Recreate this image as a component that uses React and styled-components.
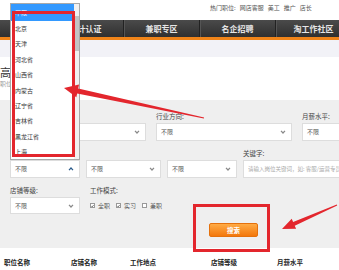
import React from "react";
import styled, { createGlobalStyle } from "styled-components";

const GlobalStyle = createGlobalStyle`
  html, body { margin: 0; padding: 0; background: #fff; }
  body { font-family: "Noto Sans CJK SC", "Noto Sans", sans-serif; color: #333; }
`;

const Page = styled.div`
  position: relative;
  width: 339px;
  height: 270px;
  overflow: hidden;
  background: #fff;
`;

const TopBar = styled.div`
  height: 20px;
  box-sizing: border-box;
  padding: 4px 0 0 210px;
  display: flex;
  gap: 4px;
  font-size: 6px;
  line-height: 7px;
  color: #555;
  white-space: nowrap;
`;

const NavBar = styled.div`
  height: 17px;
  display: flex;
  padding-left: 48px;
  background: linear-gradient(#4a4a4a, #303030);
  border-bottom: 3px solid #f08419;
`;

const NavItem = styled.div`
  width: 75px;
  flex: none;
  display: flex;
  align-items: center;
  justify-content: center;
  font-size: 8px;
  font-weight: 700;
  color: #e6e6e6;
  border-left: ${(p) => (p.$first ? "none" : "1px solid #222")};
  box-shadow: ${(p) => (p.$first ? "none" : "inset 1px 0 0 #555")};
  white-space: nowrap;
`;

const SubBand = styled.div`
  height: 17px;
  background: #f2f2f7;
`;

const TitleArea = styled.div`
  height: 43px;
  box-sizing: border-box;
  padding-top: 9px;
`;

const Title = styled.div`
  font-size: 11px;
  line-height: 12px;
  color: #333;
`;

const SubTitle = styled.div`
  margin-top: 2px;
  font-size: 6px;
  line-height: 7px;
  color: #999;
`;

const Form = styled.div`
  height: 148px;
  box-sizing: border-box;
  background: #efefef;
  padding: 12px 0 0 10px;
  display: flex;
  flex-direction: column;
  gap: 8px;
`;

const Row = styled.div`
  display: grid;
  grid-template-columns: ${(p) => p.$cols};
  column-gap: ${(p) => p.$gap}px;
  align-items: end;
`;

const Field = styled.div`
  display: flex;
  flex-direction: column;
  gap: 2px;
`;

const Label = styled.div`
  height: 9px;
  font-size: 6.5px;
  line-height: 9px;
  color: #444;
  white-space: nowrap;
`;

const Select = styled.div`
  height: ${(p) => p.$h || 18}px;
  box-sizing: border-box;
  background: #fff;
  border: 1px solid #dddddd;
  padding: 0 5px 0 4px;
  display: flex;
  align-items: center;
  justify-content: space-between;
  font-size: 6px;
  line-height: 8px;
  color: #555;
`;

const Input = styled.input`
  display: block;
  width: 130px;
  height: 18px;
  box-sizing: border-box;
  border: 1px solid #dddddd;
  background: #fff;
  padding: 0 4px;
  font-family: inherit;
  font-size: 5.5px;
  outline: none;
  &::placeholder { color: #aaa; }
`;

const Checks = styled.div`
  height: 17px;
  display: flex;
  align-items: center;
  gap: 6px;
`;

const Check = styled.label`
  display: flex;
  align-items: center;
  gap: 3px;
  font-size: 6px;
  line-height: 8px;
  color: #555;
`;

const Box = styled.span`
  width: 5px;
  height: 5px;
  box-sizing: border-box;
  border: 1px solid #999;
  background: #fff;
  display: flex;
  align-items: center;
  justify-content: center;
`;

const ButtonRow = styled.div`
  display: flex;
  padding-left: 199px;
  margin-top: 1px;
`;

const SearchButton = styled.button`
  width: 49px;
  height: 14px;
  padding: 0;
  border: 1px solid #e5710c;
  border-radius: 2px;
  background: linear-gradient(#ffab45, #f3780c);
  color: #fff;
  font-family: inherit;
  font-size: 6.5px;
  font-weight: 700;
  line-height: 12px;
`;

const TableHead = styled.div`
  height: 22px;
  box-sizing: border-box;
  padding: 10px 0 0 4px;
  display: grid;
  grid-template-columns: 67px 59px 81px 66px 1fr;
  font-size: 6.5px;
  line-height: 8px;
  font-weight: 700;
  color: #222;
`;

const Dropdown = styled.div`
  position: absolute;
  left: 10px;
  top: 3px;
  width: 70px;
  height: 157px;
  box-sizing: border-box;
  border: 1px solid #a9a9a9;
  background: #fff;
  overflow: hidden;
`;

const Option = styled.div`
  height: ${(p) => p.$h}px;
  line-height: ${(p) => p.$h}px;
  padding-left: 4px;
  font-size: 6px;
  color: ${(p) => (p.$active ? "#fff" : "#333")};
  background: ${(p) => (p.$active ? "#3399ff" : "transparent")};
  white-space: nowrap;
`;

const ScrollTrack = styled.div`
  position: absolute;
  right: 0;
  top: 0;
  bottom: 0;
  width: 5px;
  background: #f1f1f1;
`;

const ScrollThumb = styled.div`
  position: absolute;
  left: 0;
  right: 0;
  top: 12px;
  height: 35px;
  background: #c4c4c4;
`;

const RedFrame = styled.div`
  position: absolute;
  left: ${(p) => p.$x}px;
  top: ${(p) => p.$y}px;
  width: ${(p) => p.$w}px;
  height: ${(p) => p.$h}px;
  box-sizing: border-box;
  border: 3px solid #e3262d;
  pointer-events: none;
`;

const Overlay = styled.svg`
  position: absolute;
  left: 0;
  top: 0;
  pointer-events: none;
`;

const Chevron = ({ up, color = "#888" }) => (
  <svg width="6" height="4" viewBox="0 0 6 4">
    <polyline
      points={up ? "1,3.2 3,1 5,3.2" : "1,0.8 3,3 5,0.8"}
      fill="none"
      stroke={color}
      strokeWidth="1.2"
    />
  </svg>
);

const Tick = () => (
  <svg width="4" height="4" viewBox="0 0 4 4">
    <polyline points="0.5,2 1.6,3.1 3.5,0.8" fill="none" stroke="#333" strokeWidth="0.9" />
  </svg>
);

const arrow = (x1, y1, x2, y2, tailW, shaftW, headL, headW) => {
  const len = Math.hypot(x2 - x1, y2 - y1);
  const ux = (x2 - x1) / len;
  const uy = (y2 - y1) / len;
  const nx = -uy;
  const ny = ux;
  const bx = x2 - ux * headL;
  const by = y2 - uy * headL;
  const side = (x, y, w, s) => `${x + (s * nx * w) / 2},${y + (s * ny * w) / 2}`;
  return [
    side(x1, y1, tailW, 1),
    side(bx, by, shaftW, 1),
    side(bx, by, headW, 1),
    `${x2},${y2}`,
    side(bx, by, headW, -1),
    side(bx, by, shaftW, -1),
    side(x1, y1, tailW, -1),
  ].join(" ");
};

const provinces = ["北京", "天津", "河北省", "山西省", "内蒙古", "辽宁省", "吉林省", "黑龙江省", "上海", "江苏省"];

const CheckItem = ({ checked, children }) => (
  <Check>
    <Box>{checked && <Tick />}</Box>
    {children}
  </Check>
);

export default function App() {
  return (
    <Page>
      <GlobalStyle />
      <TopBar>
        <span>热门职位:</span>
        <span>网店客服</span>
        <span>美工</span>
        <span>推广</span>
        <span>店长</span>
      </TopBar>
      <NavBar>
        <NavItem $first>设计认证</NavItem>
        <NavItem>兼职专区</NavItem>
        <NavItem>名企招聘</NavItem>
        <NavItem>淘工作社区</NavItem>
      </NavBar>
      <SubBand />
      <TitleArea>
        <Title>高</Title>
        <SubTitle>职位</SubTitle>
      </TitleArea>

      <Form>
        <Row $cols="136px 136px 136px" $gap={10}>
          <Field>
            <Label>工作地点:</Label>
            <Select>不限<Chevron /></Select>
          </Field>
          <Field>
            <Label>行业方向:</Label>
            <Select>不限<Chevron /></Select>
          </Field>
          <Field>
            <Label>月薪水平:</Label>
            <Select>不限<Chevron /></Select>
          </Field>
        </Row>
        <Row $cols="70px 75px 70px 130px" $gap={6}>
          <Select>不限<Chevron up color="#2a5a8a" /></Select>
          <Select>不限<Chevron /></Select>
          <Select>不限<Chevron /></Select>
          <Field>
            <Label>关键字:</Label>
            <Input placeholder="请输入岗位关键词，如: 客服/运营专员" />
          </Field>
        </Row>
        <Row $cols="70px 140px" $gap={10}>
          <Field>
            <Label>店铺等级:</Label>
            <Select $h={17}>不限<Chevron /></Select>
          </Field>
          <Field>
            <Label>工作模式:</Label>
            <Checks>
              <CheckItem checked>全职</CheckItem>
              <CheckItem checked>实习</CheckItem>
              <CheckItem>兼职</CheckItem>
            </Checks>
          </Field>
        </Row>
        <ButtonRow>
          <SearchButton>搜索</SearchButton>
        </ButtonRow>
      </Form>

      <TableHead>
        <span>职位名称</span>
        <span>店铺名称</span>
        <span>工作地点</span>
        <span>店铺等级</span>
        <span>月薪水平</span>
      </TableHead>

      <Dropdown>
        <Option $h={17} $active>不限</Option>
        {provinces.map((p) => (
          <Option key={p} $h={15.4}>{p}</Option>
        ))}
        <ScrollTrack>
          <ScrollThumb />
        </ScrollTrack>
      </Dropdown>
      <RedFrame $x={12} $y={11} $w={63} $h={146} />
      <RedFrame $x={193} $y={204} $w={77} $h={48} />

      <Overlay width="339" height="270" viewBox="0 0 339 270">
        <polygon points={arrow(204, 118, 64, 88, 1, 5, 14, 13)} fill="#e3262d" />
        <polygon points={arrow(337, 205, 282, 229, 1, 4, 13, 11)} fill="#e3262d" />
      </Overlay>
    </Page>
  );
}
